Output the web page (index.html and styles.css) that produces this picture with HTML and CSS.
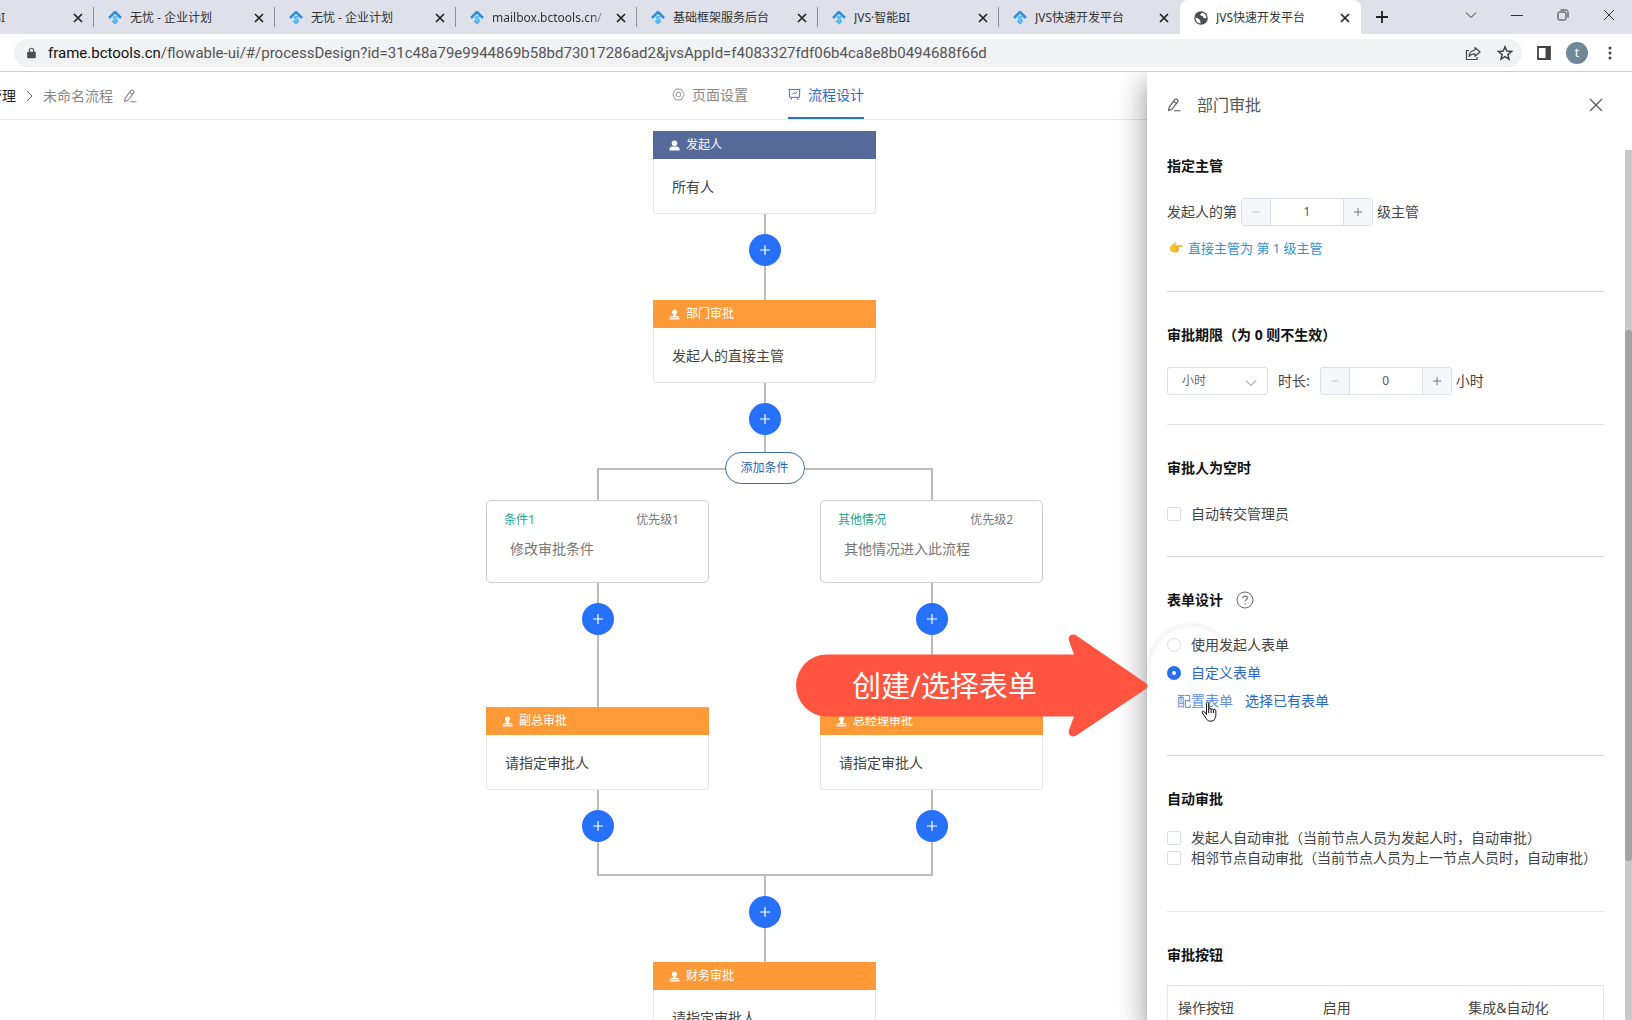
FILE: index.html
```html
<!DOCTYPE html>
<html lang="zh-CN">
<head>
<meta charset="utf-8">
<title>JVS快速开发平台</title>
<link rel="stylesheet" href="styles.css">
</head>
<body>
<svg class="defs" aria-hidden="true">
  <symbol id="i-logo" viewBox="0 0 14 14"><path d="M1 7 7 1l6 6" fill="none" stroke="#2f8fe0" stroke-width="2.6"/><path d="M9.6 5.8H6.8c-1.800 0-1.800 2 0 2h.6c1.800 0 1.800 2 0 2H5M4.200 9.800 7 12.600l2.800-2.800" fill="none" stroke="#4fb3f2" stroke-width="1.500"/></symbol>
  <symbol id="i-x" viewBox="0 0 10 10"><path d="m1 1 8 8M9 1 1 9" fill="none" stroke="currentColor" stroke-width="1.700"/></symbol>
  <symbol id="i-thin-x" viewBox="0 0 14 14"><path d="m1 1 12 12M13 1 1 13" fill="none" stroke="currentColor" stroke-width="1.200"/></symbol>
  <symbol id="i-pen" viewBox="0 0 14 14"><path d="M1.500 12.500 2.300 8.900 7.800 1.600c.5-.6 1.200-.7 1.800-.3l.9.7c.6.5.7 1.200.2 1.800L5.200 11l-3.700 1.500ZM6.600 3.200l2.800 2.200M7 12.800h6.500" fill="none" stroke="currentColor" stroke-width="1.100" stroke-linejoin="round"/></symbol>
  <symbol id="i-user" viewBox="0 0 12 12"><circle cx="6" cy="3.500" r="3" fill="currentColor"/><path d="M.5 11.500V10c0-2 1.500-3 3-3h5c1.500 0 3 1 3 3v1.500Z" fill="currentColor"/></symbol>
  <symbol id="i-stamp" viewBox="0 0 12 12"><path d="M6 .5a2.800 2.800 0 0 1 2.100 4.700C7.200 6.300 7 7.200 8 7.500l2.800.7c.6.200.7.600.7 1.200H.5c0-.6.1-1 .7-1.200L4 7.500c1-.3.800-1.200-.1-2.300A2.800 2.800 0 0 1 6 .5ZM.5 10.200h11v1.300H.5Z" fill="currentColor"/></symbol>
  <symbol id="i-plus" viewBox="0 0 12 12"><path d="M6 1v10M1 6h10" fill="none" stroke="currentColor" stroke-width="1.200"/></symbol>
  <symbol id="i-minus" viewBox="0 0 12 12"><path d="M2 6h8" fill="none" stroke="currentColor"/></symbol>
  <symbol id="i-down" viewBox="0 0 12 12"><path d="m1 3.500 5 5 5-5" fill="none" stroke="currentColor" stroke-width="1.100"/></symbol>
</svg>

<div class="browser">
  <div class="tabstrip">
    <div class="tab"><svg class="fav"><use href="#i-logo"/></svg><span>JVS·智能BI</span><button class="tab-close" aria-label="关闭"><svg><use href="#i-x"/></svg></button></div>
    <div class="tab"><svg class="fav"><use href="#i-logo"/></svg><span>无忧 - 企业计划</span><button class="tab-close" aria-label="关闭"><svg><use href="#i-x"/></svg></button></div>
    <div class="tab"><svg class="fav"><use href="#i-logo"/></svg><span>无忧 - 企业计划</span><button class="tab-close" aria-label="关闭"><svg><use href="#i-x"/></svg></button></div>
    <div class="tab"><svg class="fav"><use href="#i-logo"/></svg><span class="fade">mailbox.bctools.cn/</span><button class="tab-close" aria-label="关闭"><svg><use href="#i-x"/></svg></button></div>
    <div class="tab"><svg class="fav"><use href="#i-logo"/></svg><span>基础框架服务后台</span><button class="tab-close" aria-label="关闭"><svg><use href="#i-x"/></svg></button></div>
    <div class="tab"><svg class="fav"><use href="#i-logo"/></svg><span>JVS·智能BI</span><button class="tab-close" aria-label="关闭"><svg><use href="#i-x"/></svg></button></div>
    <div class="tab last"><svg class="fav"><use href="#i-logo"/></svg><span>JVS快速开发平台</span><button class="tab-close" aria-label="关闭"><svg><use href="#i-x"/></svg></button></div>
    <div class="tab active"><svg class="fav" viewBox="0 0 14 14"><circle cx="7" cy="7" r="6.800" fill="#4b4f54"/><path d="M1.500 6.500c1.500.2 2.500.6 3.200 1.500.6.8 1.500.6 1.500 1.600 0 1 .2 1.600.6 2.800C3.800 12.400 1.400 10 1.500 6.500ZM8 1.800c-.2 1-1.800 1-1.700 2.200.1 1.200 2 .5 2.600 1.300.6.9.1 1.500 1 1.900.9.4 1.500-.4 2.500-.2.100-2.600-1.800-4.800-4.400-5.200Z" fill="#fff"/></svg><span>JVS快速开发平台</span><button class="tab-close" aria-label="关闭"><svg><use href="#i-x"/></svg></button></div>
    <button class="new-tab" aria-label="新标签页"><svg viewBox="0 0 12 12"><path d="M6 0v12M0 6h12" stroke="currentColor" stroke-width="1.800"/></svg></button>
    <div class="window-buttons">
      <button aria-label="搜索标签页"><svg viewBox="0 0 12 12"><path d="m1 3.500 5 5 5-5" fill="none" stroke="currentColor"/></svg></button>
      <button aria-label="最小化"><svg viewBox="0 0 12 12"><path d="M0 6.500h12" stroke="currentColor"/></svg></button>
      <button aria-label="还原"><svg viewBox="0 0 12 12"><rect x="1" y="3" width="8" height="8" rx="1.500" fill="none" stroke="currentColor"/><path d="M3.500 1h5.200c1.500 0 2.300.8 2.300 2.300v5.200" fill="none" stroke="currentColor"/></svg></button>
      <button aria-label="关闭窗口"><svg viewBox="0 0 12 12"><path d="m1 1 10 10M11 1 1 11" stroke="currentColor"/></svg></button>
    </div>
  </div>
  <div class="toolbar">
    <div class="address">
      <svg class="lock" viewBox="0 0 10 12"><path d="M1 4.500h8a.8.8 0 0 1 .8.800v5.400a1 1 0 0 1-1 1H1.200a1 1 0 0 1-1-1V5.300A.8.8 0 0 1 1 4.500Z" fill="#4b4f54"/><path d="M2.700 5V3a2.300 2.300 0 0 1 4.600 0v2" fill="none" stroke="#4b4f54" stroke-width="1.300"/></svg>
      <span class="url"><b>frame.bctools.cn</b>/flowable-ui/#/processDesign?id=31c48a79e9944869b58bd73017286ad2&amp;jvsAppId=f4083327fdf06b4ca8e8b0494688f66d</span>
      <button aria-label="分享"><svg viewBox="0 0 16 16"><path d="M4 5.500H1.500v9H12V12" fill="none" stroke="currentColor" stroke-width="1.200"/><path d="M10 2.500 15 7l-5 4.300V8.800c-2.500 0-4.500.7-6 2.700.4-3.500 2.500-6 6-6.500Z" fill="none" stroke="currentColor" stroke-width="1.200" stroke-linejoin="round"/></svg></button>
      <button aria-label="收藏"><svg viewBox="0 0 16 16"><path d="m8 1.800 1.800 4.300 4.700.4-3.600 3.100 1.100 4.600L8 11.700l-4 2.500 1.100-4.600-3.600-3.100 4.700-.4Z" fill="none" stroke="currentColor" stroke-width="1.500"/></svg></button>
    </div>
    <button aria-label="侧边栏"><svg viewBox="0 0 16 16"><path d="M2 2h12v12H2Z" fill="none" stroke="currentColor" stroke-width="1.800"/><path d="M9.500 2H14v12H9.500Z" fill="currentColor"/></svg></button>
    <button class="avatar">t</button>
    <button aria-label="菜单"><svg viewBox="0 0 16 16"><g fill="currentColor"><circle cx="8" cy="3" r="1.500"/><circle cx="8" cy="8" r="1.500"/><circle cx="8" cy="13" r="1.500"/></g></svg></button>
  </div>
</div>

<div class="page">
  <main class="workspace">
    <header class="page-head">
      <nav class="crumbs">
        <a href="#apps">管理</a>
        <svg class="chev" viewBox="0 0 8 12"><path d="m1 1 5 5-5 5" fill="none" stroke="#555"/></svg>
        <span>未命名流程</span>
        <svg class="pen"><use href="#i-pen"/></svg>
      </nav>
      <nav class="views">
        <a href="#page"><svg viewBox="0 0 14 14"><path d="M4 1.200h6L13.200 7 10 12.800H4L.8 7Z" fill="none" stroke="currentColor" stroke-linejoin="round"/><circle cx="7" cy="7" r="2.600" fill="none" stroke="currentColor"/></svg>页面设置</a>
        <a href="#flow" class="on"><svg viewBox="0 0 14 14"><path d="M.5 1.500h13M1.500 1.500v8.500h11V1.500M4.500 10l-1.500 3M9.500 10l1.500 3M4.500 7l2-2 1.200 1.200L10 4" fill="none" stroke="currentColor"/></svg>流程设计</a>
      </nav>
    </header>

    <div class="canvas">
      <div class="flow">
        <section class="node start"><h3><svg><use href="#i-user"/></svg>发起人</h3><p>所有人</p></section>
        <div class="link"><button aria-label="添加节点"><svg><use href="#i-plus"/></svg></button></div>
        <section class="node"><h3><svg><use href="#i-stamp"/></svg>部门审批</h3><p>发起人的直接主管</p></section>
        <div class="link short"><button aria-label="添加节点"><svg><use href="#i-plus"/></svg></button></div>
        <button class="add-branch">添加条件</button>
        <div class="branches">
          <div class="branch">
            <section class="cond"><header><b>条件1</b><span>优先级1</span></header><p>修改审批条件</p></section>
            <div class="link long"><button aria-label="添加节点"><svg><use href="#i-plus"/></svg></button></div>
            <section class="node"><h3><svg><use href="#i-stamp"/></svg>副总审批</h3><p>请指定审批人</p></section>
            <div class="link"><button aria-label="添加节点"><svg><use href="#i-plus"/></svg></button></div>
          </div>
          <div class="branch">
            <section class="cond"><header><b>其他情况</b><span>优先级2</span></header><p>其他情况进入此流程</p></section>
            <div class="link long"><button aria-label="添加节点"><svg><use href="#i-plus"/></svg></button></div>
            <section class="node"><h3><svg><use href="#i-stamp"/></svg>总经理审批</h3><p>请指定审批人</p></section>
            <div class="link"><button aria-label="添加节点"><svg><use href="#i-plus"/></svg></button></div>
          </div>
        </div>
        <div class="link"><button aria-label="添加节点"><svg><use href="#i-plus"/></svg></button></div>
        <section class="node"><h3><svg><use href="#i-stamp"/></svg>财务审批</h3><p>请指定审批人</p></section>
      </div>
    </div>
  </main>

  <aside class="drawer">
    <header class="drawer-head">
      <svg class="pen"><use href="#i-pen"/></svg>
      <h2>部门审批</h2>
      <button aria-label="关闭"><svg><use href="#i-thin-x"/></svg></button>
    </header>
    <div class="drawer-body">
      <section class="group leader">
        <h4>指定主管</h4>
        <div class="row">
          <label for="level">发起人的第</label>
          <div class="number"><button class="off" aria-label="减少"><svg><use href="#i-minus"/></svg></button><input id="level" value="1"><button aria-label="增加"><svg><use href="#i-plus"/></svg></button></div>
          <span>级主管</span>
        </div>
        <p class="hint"><svg viewBox="0 0 14 14"><path d="M.8 6.500c0-1.200 1.300-2 2.600-3L6 1.600c1-.6 1.900.3 1.300 1.200L6.400 4h6.300c1.200 0 1.200 2 0 2H9.600c1 .3.900 1.900-.1 1.900.9.400.6 1.800-.3 1.800.6.500.2 1.700-.6 1.700H4.500C2.200 11.400.8 9.500.8 6.500Z" fill="#fbbf35"/><path d="M6.600 6h3M6.600 7.900h2.900M6.600 9.700h2.600" stroke="#e08a1c" stroke-width=".7"/></svg>直接主管为 第 1 级主管</p>
      </section>
      <section class="group limit">
        <h4>审批期限（为 0 则不生效）</h4>
        <div class="row">
          <div class="select"><select aria-label="单位"><option>小时</option></select><svg><use href="#i-down"/></svg></div>
          <label class="duration" for="hours">时长:</label>
          <div class="number"><button class="off" aria-label="减少"><svg><use href="#i-minus"/></svg></button><input id="hours" value="0"><button aria-label="增加"><svg><use href="#i-plus"/></svg></button></div>
          <span>小时</span>
        </div>
      </section>
      <section class="group empty">
        <h4>审批人为空时</h4>
        <label class="choice"><input type="checkbox">自动转交管理员</label>
      </section>
      <section class="group form">
        <h4>表单设计<svg class="help" viewBox="0 0 18 18"><circle cx="9" cy="9" r="8" fill="none" stroke="#666"/><path d="M6.800 7.200c0-3 4.600-2.900 4.600-.2 0 1.600-2.300 1.700-2.300 3.600M9.100 12v1.300" fill="none" stroke="#666" stroke-width="1.100"/></svg></h4>
        <label class="choice"><input type="radio" name="form">使用发起人表单</label>
        <label class="choice chosen"><input type="radio" name="form" checked>自定义表单</label>
        <div class="links"><a class="hover" href="#config">配置表单</a><a href="#pick">选择已有表单</a><i class="ripple"></i>
          <svg class="cursor" viewBox="0 0 18 22"><path d="M5.500 13.500V2.300c0-1.600 2.200-1.600 2.200 0v6c.2-1.400 2.400-1.200 2.400.2.300-1.100 2.400-.9 2.400.5.400-1 2.300-.8 2.300.8 0 4 .5 6-1.300 8.500-.8 2.300-6.200 2.500-7.500.4C4.800 16.500 2.400 14 1.300 11.800c-.7-1.500 1-2.300 2-1.200Z" fill="#fff" stroke="#111" stroke-linejoin="round"/><path d="M7.700 8v4M10.100 8.500V12M12.500 9v3" stroke="#111"/></svg>
        </div>
      </section>
      <section class="group auto">
        <h4>自动审批</h4>
        <label class="choice"><input type="checkbox">发起人自动审批（当前节点人员为发起人时，自动审批）</label>
        <label class="choice"><input type="checkbox">相邻节点自动审批（当前节点人员为上一节点人员时，自动审批）</label>
      </section>
      <section class="group buttons">
        <h4>审批按钮</h4>
        <table>
          <thead><tr><th>操作按钮</th><th>启用</th><th>集成&amp;自动化</th></tr></thead>
        </table>
      </section>
    </div>
    <div class="scroll"><i></i></div>
  </aside>

  <div class="callout">
    <svg viewBox="0 0 352 104"><path d="M31 20.500H278L273 7c-1.500-5 3-8.500 8-5l68 46.500c3.500 2.500 3.500 4.500 0 7L281 101c-5 3.500-9.500 0-8-5l5-13.500H31a31 31 0 0 1 0-62Z" fill="#ff5540"/></svg>
    <span>创建/选择表单</span>
  </div>
</div>
</body>
</html>
```
FILE: styles.css
```css
* { box-sizing: border-box; }
html, body { height: 100%; margin: 0; overflow: hidden; }
body {
  display: flex;
  flex-direction: column;
  font-family: "Noto Sans", "Noto Sans CJK SC", sans-serif;
  font-size: 14px;
  line-height: 20px;
  color: #444;
  background: #fff;
}
h2, h3, h4, p { margin: 0; font-weight: 400; }
a { text-decoration: none; color: inherit; }
button { display: flex; align-items: center; justify-content: center; flex: none; border: 0; padding: 0; background: none; font: inherit; color: inherit; }
svg { flex: none; }
.defs { position: absolute; width: 0; height: 0; }

/* browser frame */
.browser { flex: none; border-bottom: 1px solid #c9cfcc; }
.tabstrip { display: flex; height: 34px; margin-left: -87px; background: #dee1ea; color: #333; font-size: 12px; }
.tab { display: flex; flex: 0 1 181px; align-items: center; gap: 8px; padding: 1px 11px 0 14px; white-space: nowrap; min-width: 0; background: linear-gradient(#8d9097, #8d9097) right center / 1px 20px no-repeat; }
.tab.last, .tab.active { background-image: none; }
.tab span { flex: 1; overflow: hidden; min-width: 0; }
.tab .fade { mask-image: linear-gradient(90deg, #000 85%, transparent); }
.tab.active { background: #fff; border-radius: 8px 8px 0 0; }
.fav { width: 14px; height: 14px; }
.tab-close { width: 10px; height: 10px; color: #222; }
.tab-close svg { width: 10px; height: 10px; }
.new-tab { width: 42px; color: #222; }
.new-tab svg { width: 12px; height: 12px; }
.window-buttons { display: flex; margin-left: auto; align-items: center; height: 30px; }
.window-buttons button { width: 46px; }
.window-buttons svg { width: 12px; height: 12px; }
.toolbar { display: flex; align-items: center; height: 37px; padding: 0 14px; gap: 14px; color: #444; }
.toolbar svg { width: 16px; height: 16px; }
.address { display: flex; flex: 1; align-items: center; height: 28px; gap: 16px; padding: 0 9px 0 13px; border-radius: 14px; background: #f1f2f4; }
.address .lock { width: 9px; height: 12px; }
.url { flex: 1; margin-left: -4px; white-space: nowrap; overflow: hidden; color: #555; font-family: Roboto, "Noto Sans", sans-serif; font-size: 15px; }
.url b { font-weight: 400; color: #111; }
.avatar { width: 22px; height: 22px; border-radius: 50%; background: #70899a; color: #fff; font-size: 12px; }

/* page */
.page { position: relative; flex: 1; min-height: 0; overflow: hidden; }
.page-head { display: grid; grid-template-columns: 672fr 960fr; height: 48px; border-bottom: 1px solid #e8e8e8; color: #888; }
.crumbs { display: flex; align-items: center; margin-left: -12px; }
.crumbs a { color: #222; }
.chev { width: 8px; height: 12px; margin: 0 9px 0 10px; }
.pen { width: 14px; height: 14px; }
.crumbs .pen { margin-left: 10px; }
.views { display: flex; gap: 40px; }
.views a { display: flex; align-items: center; gap: 7px; border-bottom: 2px solid transparent; }
.views svg { width: 13px; height: 13px; }
.views .on { color: #2d68d8; border-color: #2373d2; }

/* process diagram */
.canvas { display: flex; justify-content: center; padding: 11px 103px 0 0; }
.flow { display: flex; flex-direction: column; align-items: center; }
.node { width: 223px; height: 83px; border: 1px solid #e6e6e6; border-top: 0; border-radius: 0 0 4px 4px; background: #fff; }
.node h3 { display: flex; align-items: center; gap: 6px; height: 28px; margin: 0 -1px; padding-left: 16px; background: #ff9a38; color: #fff; font-size: 12px; }
.node.start h3 { background: #566a9a; }
.node svg { width: 11px; height: 11px; }
.node p { padding: 18px 18px; }
.link { display: flex; flex-direction: column; align-items: center; height: 86px; padding-top: 20px; background: linear-gradient(#bbb, #bbb) center / 2px 100% no-repeat; }
.link.short { height: 69px; }
.link.long { height: 124px; }
.link button { width: 32px; height: 32px; border-radius: 50%; background: #2670fa; color: #fff; }
.link svg { width: 12px; height: 12px; }
.add-branch { position: relative; z-index: 1; width: 80px; height: 32px; border: 1px solid #3a6fb5; border-radius: 16px; background: #fff; color: #2a5fb8; font-size: 12px; }
.branches { display: flex; margin-top: -16px; }
.branch { position: relative; display: flex; flex-direction: column; align-items: center; width: 334px; padding-top: 32px; background: linear-gradient(#bbb, #bbb) center top / 2px 32px no-repeat; }
.branch::before, .branch::after { content: ""; position: absolute; left: 166px; width: 168px; height: 2px; background: #bbb; }
.branch::before { top: 0; }
.branch::after { bottom: 0; }
.branch + .branch::before, .branch + .branch::after { left: 0; }
.cond { width: 223px; height: 83px; border: 1px solid #ccc; border-radius: 5px; background: #fff; color: #777; padding: 9px 29px 0 17px; }
.cond header { display: flex; justify-content: space-between; font-size: 12px; }
.cond b { font-weight: 400; color: #18a58a; }
.cond p { padding: 9px 6px; }

/* drawer */
.drawer { position: absolute; top: 0; right: 0; bottom: 0; width: 485px; background: #fff; box-shadow: 0 8px 10px -5px rgba(0,0,0,.2), 0 16px 24px 2px rgba(0,0,0,.2), 0 6px 30px 5px rgba(0,0,0,.16); }
.drawer-head { display: flex; align-items: center; gap: 16px; height: 66px; padding: 0 29px 0 20px; color: #555; }
.drawer-head h2 { flex: 1; font-size: 16px; }
.drawer-head button svg { width: 14px; height: 14px; }
.drawer-body { padding: 18px 28px 0 20px; }
.group { padding-top: 33px; border-bottom: 1px solid #d4d4d4; }
.group h4 { display: flex; align-items: center; gap: 13px; height: 20px; margin-bottom: 22px; color: #111; font-weight: 700; }
.leader { padding: 0 0 33px; }
.limit { padding-bottom: 29px; border-color: #e2e2e2; }
.empty { padding-bottom: 28px; }
.form { padding-bottom: 40px; }
.auto { padding-bottom: 43px; border-color: #e8e8e8; }
.form h4 { margin-bottom: 21px; }
.auto h4 { margin-bottom: 19px; }
.buttons h4 { margin-bottom: 20px; }
.buttons { border: 0; }
.row { display: flex; align-items: center; gap: 4px; height: 28px; }
.number { display: flex; width: 132px; height: 28px; border: 1px solid #dcdfe6; border-radius: 3px; overflow: hidden; }
.number button { width: 28px; background: #f5f7fa; color: #777; }
.number .off { color: #b5b8be; }
.number svg { width: 10px; height: 10px; }
.number input { flex: 1; min-width: 0; border: 1px solid #dcdfe6; border-width: 0 1px; padding: 0; text-align: center; font: inherit; font-size: 12px; color: #555; }
.hint { display: flex; align-items: center; gap: 5px; margin-top: 12px; padding-left: 2px; color: #3292cf; font-size: 13px; }
.hint svg { width: 14px; height: 14px; }
.select { position: relative; width: 101px; height: 28px; }
.select select { appearance: none; width: 100%; height: 28px; padding: 0 14px; border: 1px solid #dcdfe6; border-radius: 3px; background: #fff; font: inherit; font-size: 12px; color: #666; }
.select svg { position: absolute; right: 11px; top: 10px; width: 12px; height: 12px; color: #b0b3b9; pointer-events: none; }
.duration { margin: 0 6px; }
.choice { display: flex; align-items: center; gap: 10px; height: 28px; white-space: nowrap; }
.auto .choice { height: 20px; }
.choice input { appearance: none; flex: none; width: 14px; height: 14px; margin: 0; border: 1px solid #dcdfe6; border-radius: 2px; background: #fff; }
.choice input[type="radio"] { border-radius: 50%; }
.choice input:checked { border: 5px solid #2670ee; }
.chosen, .links a { color: #2a67c8; }
.links .hover { color: #6590e0; }
.help { width: 18px; height: 18px; }
.links { position: relative; display: flex; align-items: center; gap: 12px; height: 28px; padding-left: 10px; }
.ripple { position: absolute; left: -22px; top: -66px; width: 92px; height: 92px; border-radius: 50%; background: radial-gradient(closest-side, transparent 82%, rgba(0,0,0,.04) 92%, transparent); mask-image: linear-gradient(160deg, #000 30%, transparent 75%); }
.cursor { position: absolute; left: 34px; top: 14px; width: 18px; height: 22px; }
table { width: 100%; border-collapse: collapse; border: 1px solid #e4e4e4; table-layout: fixed; }
th { height: 44px; padding: 0 10px; text-align: left; font-weight: 400; }
.scroll { position: absolute; right: 0; top: 78px; bottom: 0; width: 7px; background: #c9c9c9; }
.scroll i { display: block; height: 61%; margin-top: 180px; border-radius: 3px; background: #a4a4a4; }

/* annotation arrow */
.callout { position: absolute; right: 484px; top: 562px; width: 352px; height: 104px; }
.callout svg { display: block; width: 352px; height: 104px; }
.callout span { position: absolute; left: 56px; top: 32px; color: #fff; font-size: 29px; line-height: 40px; white-space: nowrap; }
```
